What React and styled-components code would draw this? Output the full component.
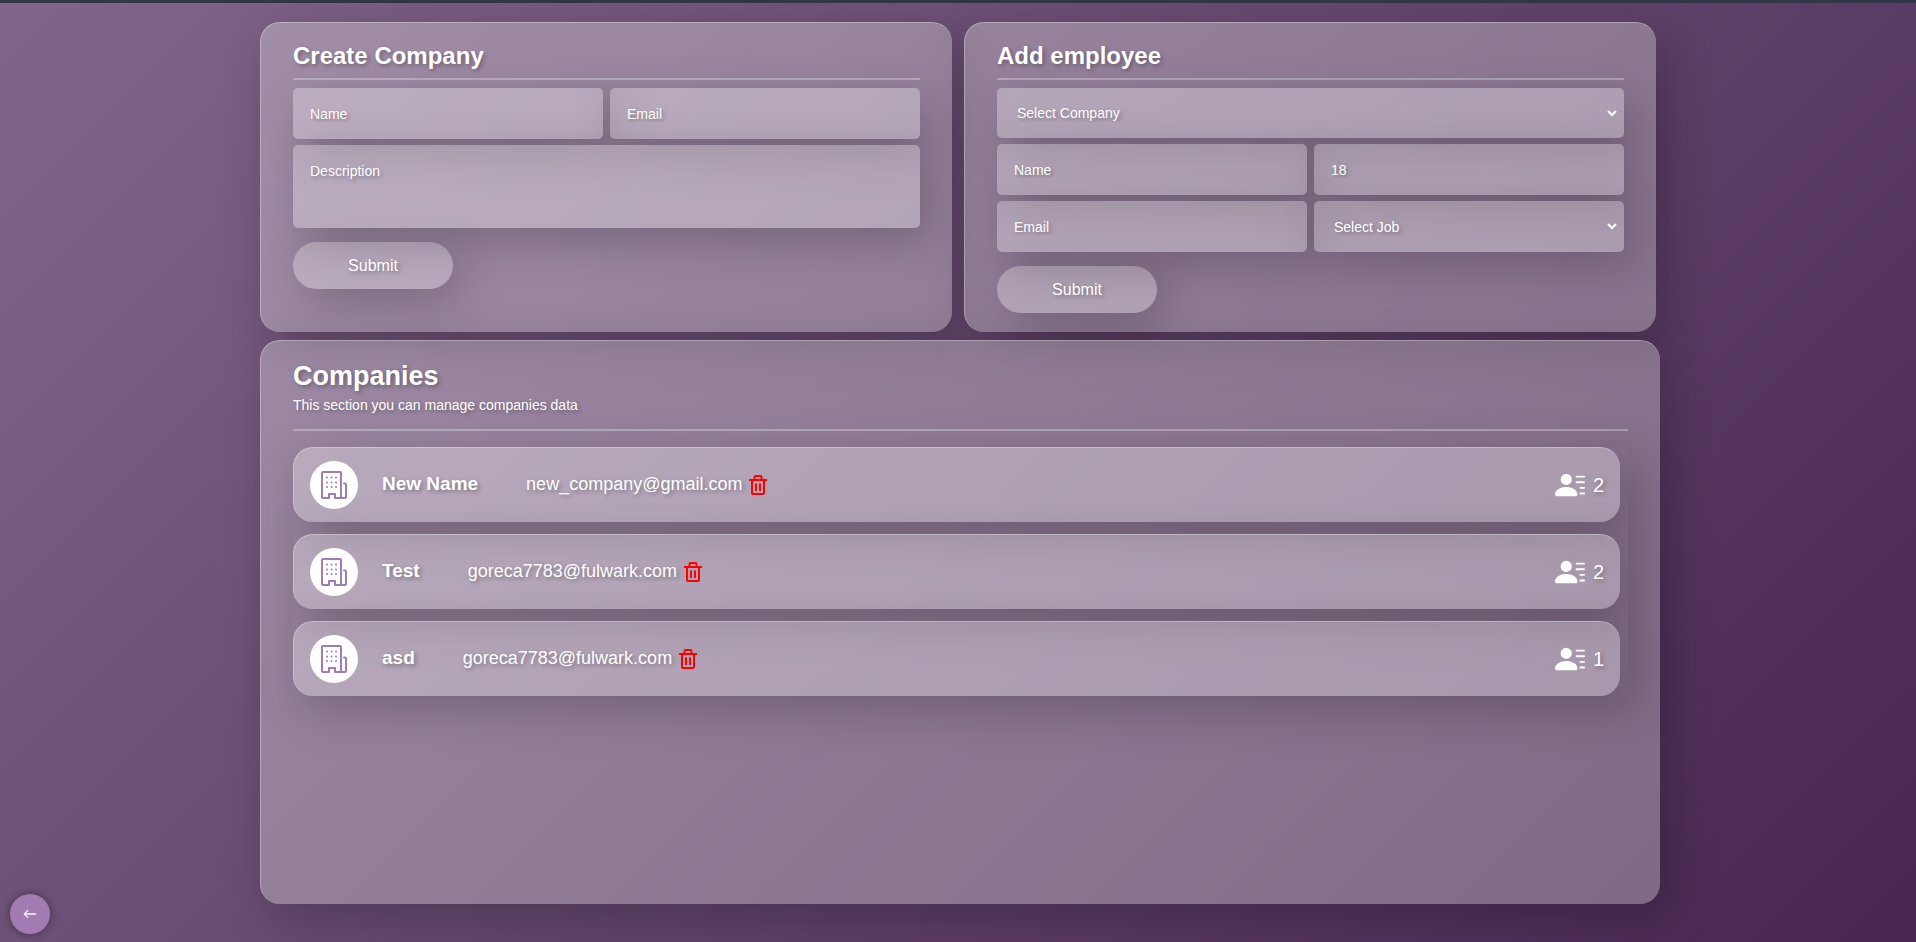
import React from 'react';
import styled, { createGlobalStyle, css } from 'styled-components';
import { BsArrowLeft, BsPersonLinesFill } from 'react-icons/bs';

const GlobalStyle = createGlobalStyle`
  *, *::before, *::after { box-sizing: border-box; }
  body {
    margin: 0;
    color: #fff;
    font-family: Arial, "Liberation Sans", sans-serif;
    text-shadow: 2px 2px 4px rgba(0, 0, 0, 0.3);
  }
`;

const shadow = '9px 13px 46px rgba(0, 0, 0, 0.23)';

const glass = css`
  background: rgba(255, 255, 255, 0.29);
  box-shadow: ${shadow};
`;

const glassEdge = css`
  border-top: 1px solid rgba(255, 255, 255, 0.3);
  border-left: 1px solid rgba(255, 255, 255, 0.3);
`;

const Page = styled.div`
  min-height: 100vh;
  padding: 19px 16px 38px 20px;
  border-top: 3px solid #303746;
  background: linear-gradient(135deg, #81668a, #472650);
  display: flex;
  justify-content: center;
`;

const Content = styled.main`
  width: 100%;
  max-width: 1400px;
  display: flex;
  flex-direction: column;
  gap: 8px;
`;

const Forms = styled.div`
  display: grid;
  grid-template-columns: 1fr 1fr;
  gap: 12px;
  padding-right: 4px;
`;

const Card = styled.section`
  ${glass}
  ${glassEdge}
  border-radius: 20px;
  padding: 19px 32px;
  flex: ${(p) => (p.$grow ? 1 : 'none')};
`;

const FormTitle = styled.h2`
  margin: 0 0 8px;
  padding-bottom: 8px;
  border-bottom: 2px solid rgba(255, 255, 255, 0.3);
  font-size: 24px;
  line-height: 28px;
`;

const Fields = styled.div`
  display: grid;
  grid-template-columns: 1fr 1fr;
  gap: 6px 7px;
`;

const field = css`
  ${glass}
  display: block;
  width: 100%;
  height: 51px;
  padding: 0 17px;
  border: 0;
  border-radius: 5px;
  outline: 0;
  color: #fff;
  font: 14px/16px Arial, "Liberation Sans", sans-serif;
  text-shadow: inherit;
  grid-column: ${(p) => (p.$wide ? '1 / -1' : 'auto')};
  &::placeholder { color: #fff; opacity: 1; }
`;

const Input = styled.input`${field}`;

const Select = styled.select`
  ${field}
  height: ${(p) => (p.$wide ? '50px' : '51px')};
  padding: 0 16px;
  border-right: 4px solid transparent;
  background-clip: border-box;
  option { color: #432350; }
`;

const TextArea = styled.textarea`
  ${field}
  height: 83px;
  padding: 18px 17px;
  resize: none;
`;

const Submit = styled.button`
  ${glass}
  display: block;
  width: 160px;
  height: 47px;
  margin-top: 14px;
  border: 0;
  border-radius: 24px;
  color: #fff;
  font: 16px/18px Arial, "Liberation Sans", sans-serif;
  text-shadow: inherit;
  cursor: pointer;
`;

const ListHeader = styled.header`
  padding-bottom: 16px;
  margin-bottom: 16px;
  border-bottom: 2px solid rgba(255, 255, 255, 0.3);
`;

const ListTitle = styled.h1`
  margin: 0;
  font-size: 27px;
  line-height: 32px;
`;

const ListHint = styled.p`
  margin: 5px 0 0;
  font-size: 14px;
  line-height: 16px;
`;

const List = styled.ul`
  margin: 0;
  padding: 0 8px 0 0;
  list-style: none;
  display: flex;
  flex-direction: column;
  gap: 12px;
  overflow: hidden;
  box-shadow: ${shadow};
`;

const Row = styled.li`
  ${glass}
  ${glassEdge}
  min-height: 75px;
  padding: 0 16px;
  border-radius: 20px;
  display: flex;
  align-items: center;
`;

const Avatar = styled.span`
  flex: none;
  width: 48px;
  height: 48px;
  border-radius: 50%;
  background: #fff;
  display: grid;
  place-items: center;
`;

const Name = styled.strong`
  margin: 0 48px 0 24px;
  padding-bottom: 2px;
  font-size: 19px;
  line-height: 22px;
`;

const Email = styled.span`
  padding-bottom: 2px;
  font-size: 18px;
  line-height: 22px;
`;

const Delete = styled.button`
  margin: 0 0 0 7px;
  padding: 0;
  border: 0;
  background: none;
  color: #f00;
  display: flex;
  cursor: pointer;
`;

const Staff = styled.span`
  margin-left: auto;
  display: flex;
  align-items: center;
  gap: 8px;
  font-size: 20px;
  line-height: 22px;
`;

const Back = styled.button`
  position: fixed;
  left: 10px;
  bottom: 8px;
  width: 40px;
  height: 40px;
  padding: 0;
  border: 0;
  border-radius: 50%;
  background: #a27bb2;
  box-shadow: 0 0 10px rgba(0, 0, 0, 0.4);
  color: #fff;
  display: grid;
  place-items: center;
  cursor: pointer;
`;

const BuildingIcon = () => (
  <svg width="28" height="30" viewBox="0 0 28 30" fill="none" stroke="#a27bb2" strokeWidth="2" strokeLinejoin="round" strokeLinecap="round" aria-hidden="true">
    <path d="M3 2H20a1 1 0 0 1 1 1V28H15V24H9V28H3a1 1 0 0 1-1-1V3a1 1 0 0 1 1-1Z" />
    <path d="M24 13.500H25a1 1 0 0 1 1 1V27a1 1 0 0 1-1 1H21" />
    <path d="M7 7.500h.01M11.500 7.500h.01M16 7.500h.01M7 12.500h.01M11.500 12.500h.01M16 12.500h.01M7 17h.01M11.500 17h.01M16 17h.01" />
  </svg>
);

const TrashIcon = () => (
  <svg width="18" height="20" viewBox="0 0 18 20" fill="none" stroke="currentColor" strokeWidth="2" aria-hidden="true">
    <path d="M0 5H18M3 5V18a1 1 0 0 0 1 1H14a1 1 0 0 0 1-1V5M5.500 5V2a1 1 0 0 1 1-1H11.500a1 1 0 0 1 1 1V5" />
    <path d="M7 8.500V16M11 8.500V16" />
  </svg>
);

const companies = [
  { name: 'New Name', email: 'new_company@gmail.com', staff: 2 },
  { name: 'Test', email: 'goreca7783@fulwark.com', staff: 2 },
  { name: 'asd', email: 'goreca7783@fulwark.com', staff: 1 },
];

export default function App() {
  return (
    <Page>
      <GlobalStyle />
      <Content>
        <Forms>
          <Card as="form">
            <FormTitle>Create Company</FormTitle>
            <Fields>
              <Input aria-label="Company name" placeholder="Name" />
              <Input aria-label="Company email" type="email" placeholder="Email" />
              <TextArea $wide aria-label="Description" placeholder="Description" />
            </Fields>
            <Submit type="button">Submit</Submit>
          </Card>
          <Card as="form">
            <FormTitle>Add employee</FormTitle>
            <Fields>
              <Select $wide aria-label="Company">
                <option>Select Company</option>
                {companies.map((c) => <option key={c.name}>{c.name}</option>)}
              </Select>
              <Input aria-label="Employee name" placeholder="Name" />
              <Input aria-label="Age" type="number" min="18" defaultValue="18" />
              <Input aria-label="Employee email" type="email" placeholder="Email" />
              <Select aria-label="Job">
                <option>Select Job</option>
              </Select>
            </Fields>
            <Submit type="button">Submit</Submit>
          </Card>
        </Forms>
        <Card $grow>
          <ListHeader>
            <ListTitle>Companies</ListTitle>
            <ListHint>This section you can manage companies data</ListHint>
          </ListHeader>
          <List>
            {companies.map((c) => (
              <Row key={c.name}>
                <Avatar><BuildingIcon /></Avatar>
                <Name>{c.name}</Name>
                <Email>{c.email}</Email>
                <Delete type="button" aria-label={`Delete ${c.name}`}><TrashIcon /></Delete>
                <Staff>
                  <BsPersonLinesFill size={30} aria-hidden="true" />
                  {c.staff}
                </Staff>
              </Row>
            ))}
          </List>
        </Card>
      </Content>
      <Back type="button" aria-label="Back"><BsArrowLeft size={14} strokeWidth={0.5} /></Back>
    </Page>
  );
}
